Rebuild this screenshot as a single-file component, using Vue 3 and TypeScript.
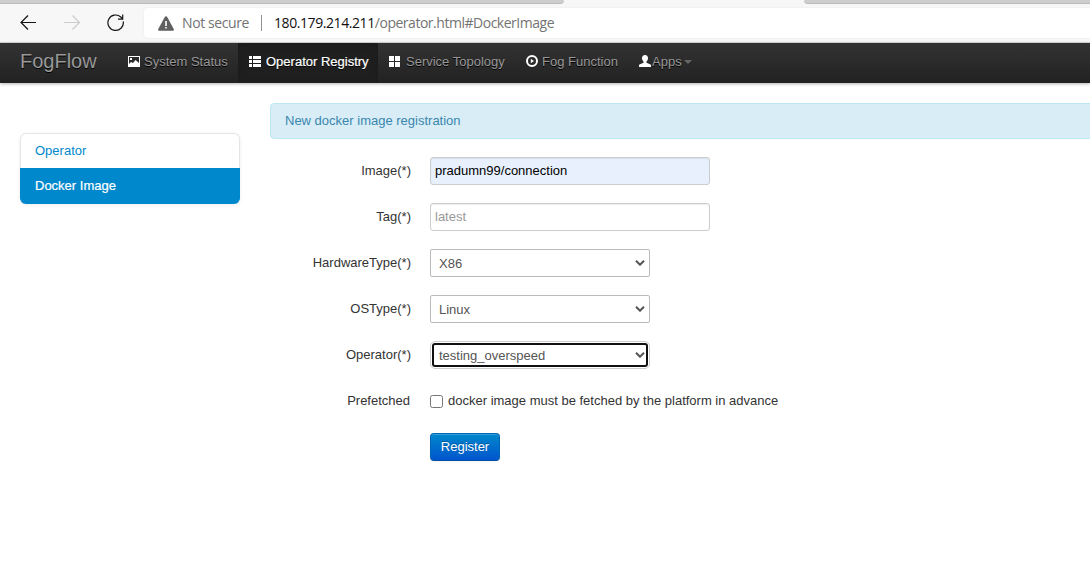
<script setup lang="ts">
import { ref } from 'vue'

type IconName = 'picture' | 'list' | 'grid' | 'play' | 'user'
interface NavItem { label: string; icon: IconName; width: number; active?: boolean; menu?: boolean }

const navItems: NavItem[] = [
  { label: 'System Status', icon: 'picture', width: 120 },
  { label: 'Operator Registry', icon: 'list', width: 140, active: true },
  { label: 'Service Topology', icon: 'grid', width: 137 },
  { label: 'Fog Function', icon: 'play', width: 113 },
  { label: 'Apps', icon: 'user', width: 74, menu: true },
]

const selects = [
  { label: 'HardwareType', value: 'X86', focused: false },
  { label: 'OSType', value: 'Linux', focused: false },
  { label: 'Operator', value: 'testing_overspeed', focused: true },
]

const image = ref('pradumn99/connection')
const tag = ref('')
const prefetched = ref(false)
</script>

<template>
  <div class="page">
    <header class="browser">
      <div class="tabs"><span class="tab left"></span><span class="tab right"></span></div>
      <div class="toolbar">
        <svg class="back" width="17" height="16" viewBox="0 0 17 16"><path d="M16 7.500H1M8 .5l-7 7 7 7" /></svg>
        <svg class="forward" width="17" height="16" viewBox="0 0 17 16"><path d="M0 7.500h15.500M8.500.5l7 7-7 7" /></svg>
        <svg class="reload" width="18" height="18" viewBox="0 0 18 18"><path d="M16.200 7.300A7.700 7.700 0 1 1 13.800 3L15.500 4.700M15.700.5V5.200H11" /></svg>
        <div class="address">
          <svg width="16" height="15" viewBox="0 0 16 15"><path d="M8 .3c.6 0 .9.300 1.200.8l6.500 12c.5 1 0 1.700-.9 1.700H1.200c-.9 0-1.400-.7-.9-1.700l6.500-12C7.100.6 7.400.3 8 .3Z" fill="#5f5f5f" /><path d="M7.200 5h1.600v5H7.200zM7.200 11h1.600v1.600H7.200z" fill="#fff" /></svg>
          <span class="security">Not secure</span>
          <i class="divider"></i>
          <span class="url"><b>180.179.214.211</b>/operator.html#DockerImage</span>
        </div>
      </div>
    </header>

    <nav class="navbar">
      <a class="brand">FogFlow</a>
      <a v-for="item in navItems" :key="item.label" class="nav-link" :class="[item.icon, { active: item.active }]" :style="{ width: item.width + 'px' }">
        <svg v-if="item.icon === 'picture'" width="12" height="11" viewBox="0 0 12 11"><path fill="#fff" fill-rule="evenodd" d="M0 0h12v11H0zM1 1v7l2-2 2 1 2.500-3L11 7V1zM2 2h2v2H2z" /></svg>
        <svg v-else-if="item.icon === 'list'" width="12" height="11" viewBox="0 0 12 11"><path fill="#fff" d="M0 0h3v3H0zM4 0h8v3H4zM0 4h3v3H0zM4 4h8v3H4zM0 8h3v3H0zM4 8h8v3H4z" /></svg>
        <svg v-else-if="item.icon === 'grid'" width="11" height="11" viewBox="0 0 11 11"><path fill="#fff" d="M0 0h5v5H0zM6 0h5v5H6zM0 6h5v5H0zM6 6h5v5H6z" /></svg>
        <svg v-else-if="item.icon === 'play'" width="12" height="12" viewBox="0 0 12 12"><circle cx="6" cy="6" r="5" fill="none" stroke="#fff" stroke-width="2" /><path d="M4.800 3.700 8 6 4.800 8.300Z" fill="#fff" /></svg>
        <svg v-else width="12" height="12" viewBox="0 0 12 12"><path fill="#fff" d="M6 0c2 0 3 1.300 3 3.200 0 1.500-.6 2.300-1.500 3.300v1.300L11 9.200c.8.300 1 .8 1 1.500V12H0v-1.300c0-.7.2-1.200 1-1.500l3.500-1.400V6.500C3.600 5.500 3 4.700 3 3.200 3 1.300 4 0 6 0Z" /></svg>
        <span class="nav-text">{{ item.label }}</span>
        <i v-if="item.menu" class="caret"></i>
      </a>
    </nav>

    <main class="content">
      <aside class="side">
        <a class="first">Operator</a>
        <a class="selected">Docker Image</a>
      </aside>
      <section class="main">
        <div class="alert"><span>New docker image registration</span></div>
        <form class="form" @submit.prevent>
          <div class="row"><label class="name required">Image(*)</label><input v-model="image" class="text filled" type="text" /></div>
          <div class="row"><label class="name required">Tag(*)</label><input v-model="tag" class="text" type="text" placeholder="latest" /></div>
          <div v-for="field in selects" :key="field.label" class="row">
            <label class="name required">{{ field.label }}(*)</label>
            <div class="select" :class="{ focused: field.focused }" tabindex="0">
              <span>{{ field.value }}</span>
              <svg width="10" height="6" viewBox="0 0 10 6"><path d="m1 .7 4 4 4-4" /></svg>
            </div>
          </div>
          <div class="row"><label class="name">Prefetched</label><label class="check"><input v-model="prefetched" type="checkbox" /><span>docker image must be fetched by the platform in advance</span></label></div>
          <button class="register" type="submit">Register</button>
        </form>
      </section>
    </main>
  </div>
</template>

<style>
body { margin: 0; background: #fff; overflow: hidden; }
</style>

<style scoped>
* { box-sizing: border-box; }
.page { width: 1090px; height: 563px; overflow: hidden; background: #fff; font: 13px/20px "Liberation Sans", Arial, sans-serif; color: #333; }
.browser { height: 43px; background: #f7f7f7; border-bottom: 1px solid #d3d9d4; }
.tabs { height: 4px; display: flex; justify-content: space-between; }
.tab { background: #cdcdcd; border-bottom: 1px solid #bcbcbc; }
.tab.left { width: 564px; border-radius: 0 0 4px 0; }
.tab.right { width: 286px; border-radius: 0 0 0 4px; }
.toolbar { display: flex; align-items: center; height: 38px; padding-left: 20px; }
.toolbar > svg { fill: none; stroke: #151515; stroke-width: 1.2; flex: none; }
.toolbar .forward { margin-left: 27px; stroke: #ccc; }
.toolbar .reload { margin-left: 26px; }
.address { display: flex; align-items: center; flex: 1; height: 30px; margin-left: 19px; padding-left: 14px; border-radius: 4px 0 0 4px; background: #fff; box-shadow: 0 0 2px #e4e4e4; font: 14px/20px "Open Sans", "Noto Sans", sans-serif; color: #737373; white-space: nowrap; }
.security { width: 68px; margin-left: 8px; letter-spacing: -.4px; }
.divider { width: 1px; height: 16px; margin: 0 12px 0 11px; background: #929292; }
.url { letter-spacing: -.48px; }
.url b { font-weight: 400; color: #111; letter-spacing: -.42px; }
.navbar { display: flex; height: 40px; background: linear-gradient(#333, #222); box-shadow: 0 1px 3px rgba(0, 0, 0, .3); border-bottom: 1px solid #222; }
.brand { width: 118px; padding: 8px 0 0 20px; font-size: 20px; color: #999; text-shadow: 0 1px 0 #000; white-space: nowrap; }
.nav-link { display: flex; align-items: center; padding: 0 0 3px 10px; color: #999; white-space: nowrap; text-shadow: 0 1px 0 #000; }
.nav-text { padding-top: 2px; }
.nav-link svg { flex: none; margin-right: 4px; }
.nav-link.list { padding-left: 11px; }
.nav-link.grid { padding-left: 11px; }
.nav-link.list svg { margin-right: 5px; }
.nav-link.grid svg { margin-right: 6px; }
.nav-link.play { padding-left: 11px; }
.nav-link.user { padding-left: 11px; }
.nav-link.user svg { margin-right: 1px; }
.nav-link.active { background: #1f1f1f; color: #fff; box-shadow: inset 0 3px 8px rgba(0, 0, 0, .12); -webkit-text-stroke: .2px #fff; }
.caret { margin: 2px 0 0 2px; border: 4px solid transparent; border-top-color: #666; border-bottom: 0; }
.content { display: flex; padding: 20px 0 0 20px; }
.side { flex: none; width: 220px; height: 71px; margin: 30px 30px 0 0; border-radius: 6px; box-shadow: 0 1px 4px rgba(0, 0, 0, .07); }
.side a { display: block; height: 35px; padding: 7px 14px; border: 1px solid #e5e5e5; border-bottom: 0; border-radius: 6px 6px 0 0; color: #0088cc; }
.side .selected { height: 36px; border-color: #0088cc; border-radius: 0 0 6px 6px; background: #0088cc; color: #fff; -webkit-text-stroke: .2px #fff; }
.main { flex: none; width: 830px; }
.alert { height: 36px; padding: 7px 14px; border: 1px solid #bce8f1; border-radius: 4px; background: #d9edf7; color: #3a87ad; }
.form { margin-top: 18px; }
.row { display: flex; height: 28px; margin-bottom: 18px; }
.name { width: 140px; margin-right: 20px; padding-top: 4px; text-align: right; white-space: nowrap; }
.name.required { width: 141px; margin-right: 19px; }
.text { width: 280px; height: 28px; padding: 3px 4px 4px; border: 1px solid #ccc; border-radius: 3px; outline: 0; background: #fff; box-shadow: inset 0 1px 1px rgba(0, 0, 0, .075); font: inherit; color: #555; }
.text.filled { background: #e8f0fe; color: #000; }
.text::placeholder { color: #999; opacity: 1; }
.select { display: flex; align-items: center; justify-content: space-between; width: 220px; height: 28px; padding: 1px 4px 0 8px; border: 1px solid #bbb; border-radius: 2px; color: #555; background: #fff; }
.select svg { margin-bottom: 1px; fill: none; stroke: #555; stroke-width: 2; }
.select.focused { outline: 2px solid #101010; outline-offset: -4px; border-radius: 5px; border-color: #ccc; }
.check { display: flex; padding-top: 4px; white-space: nowrap; }
.check input { width: 13px; height: 13px; margin: 4px 5px 0 0; }
.register { display: block; width: 70px; height: 28px; margin: 0 0 0 160px; padding: 0; border: 1px solid #0064b5; border-bottom-color: #004fa5; border-radius: 4px; background: linear-gradient(#0088cc, #0055cc); box-shadow: inset 0 1px 0 rgba(255, 255, 255, .2), 0 1px 2px rgba(0, 0, 0, .05); color: #fff; font: inherit; text-shadow: 0 -1px 0 rgba(0, 0, 0, .25); }
</style>
